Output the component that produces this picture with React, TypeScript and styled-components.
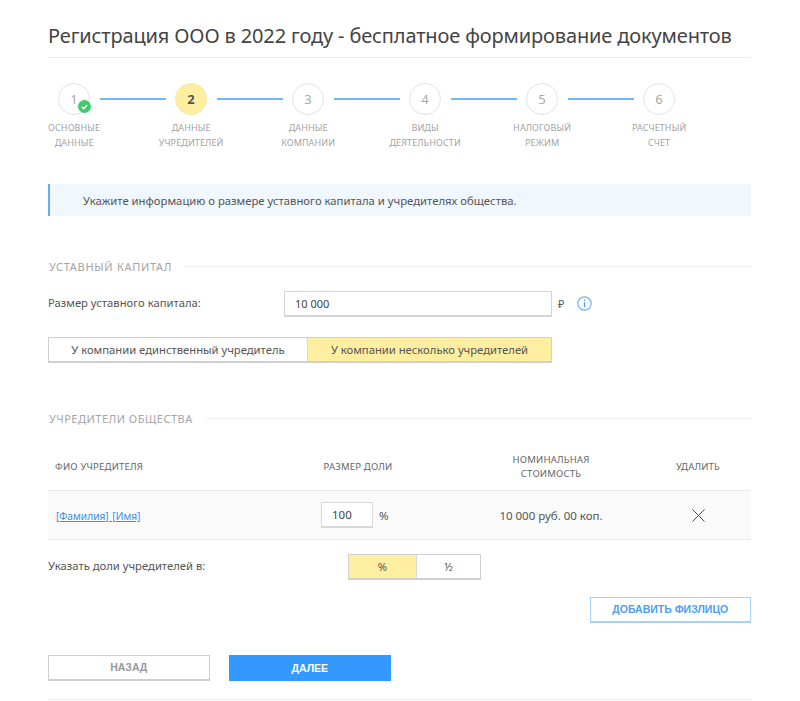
import React from "react";
import styled, {createGlobalStyle} from "styled-components";
import {X} from "lucide-react";

const GlobalStyle = createGlobalStyle`
  html, body {
    margin: 0;
    padding: 0;
    background: #fff;
  }
  * {
    box-sizing: border-box;
  }
`

const Page = styled.div`
  width: 800px;
  height: 701px;
  padding: 0 49px 0 48px;
  font-family: "Noto Sans", "Open Sans", sans-serif;
  color: #555;
  overflow: hidden;
`
const Title = styled.h1`
  margin: 0;
  height: 58px;
  padding-top: 20px;
  font-size: 20px;
  line-height: 32px;
  letter-spacing: -.14px;
  font-weight: 400;
  color: #444;
  white-space: nowrap;
  border-bottom: 1px solid #ececec;
`
const Track = styled.div`
  display: flex;
  align-items: center;
  margin: 25px 0 0 10px;
`
const Circle = styled.div<{$active?: boolean}>`
  position: relative;
  flex: none;
  width: 32px;
  height: 32px;
  border-radius: 50%;
  display: flex;
  align-items: center;
  justify-content: center;
  font-size: 13px;
  font-weight: ${p => p.$active ? 700 : 400};
  color: ${p => p.$active ? "#555" : "#aaa"};
  background: ${p => p.$active ? "#fdeea0" : "#fff"};
  border: 1px solid ${p => p.$active ? "#f5e9a8" : "#e4e4e4"};
`
const Check = styled.svg`
  position: absolute;
  right: -2px;
  bottom: 1px;
  width: 13px;
  height: 13px;
`
const Line = styled.div`
  flex: none;
  width: 66px;
  height: 2px;
  margin: 0 9.5px;
  background: #6db8f7;
`
const Labels = styled.div`
  display: flex;
  margin: 5px 0 0 -32.4px;
`
const Label = styled.div`
  flex: none;
  width: 117px;
  text-align: center;
  font-size: 9px;
  line-height: 15px;
  letter-spacing: .1px;
  text-transform: uppercase;
  color: #a3a3a3;
`
const Notice = styled.div`
  margin-top: 34px;
  height: 32px;
  padding-left: 33px;
  display: flex;
  align-items: center;
  font-size: 11.3px;
  color: #555;
  background: #f0f7fd;
  border-left: 2px solid #62aef8;
`
const SectionHead = styled.div<{$top: number, $spacing: number}>`
  display: flex;
  align-items: center;
  gap: 13px;
  height: 16px;
  margin-top: ${p => p.$top}px;
  padding-left: 1px;
  font-size: 11px;
  letter-spacing: ${p => p.$spacing}px;
  text-transform: uppercase;
  white-space: nowrap;
  color: #a5a5a5;

  &::after {
    content: "";
    flex: 1;
    height: 1px;
    background: #f0f0f0;
  }
`
const FormRow = styled.div`
  display: flex;
  align-items: center;
  margin-top: 17px;
`
const FieldLabel = styled.div`
  width: 236px;
  font-size: 11.25px;
  color: #555;
  margin-top: -3px;
`
const TextInput = styled.input`
  width: 268px;
  height: 26px;
  padding: 0 10px;
  font-family: inherit;
  font-size: 11px;
  color: #444;
  background: #fff;
  border: 1px solid #d4d4d4;
  border-bottom-width: 2px;
  outline: none;
`
const Ruble = styled.span`
  margin: -2px 0 0 6px;
  font-size: 11px;
  color: #555;
`
const InfoIcon = styled.svg`
  margin: -2px 0 0 13px;
  width: 15px;
  height: 15px;
`
const Toggle = styled.div<{$w: number, $top: number}>`
  display: flex;
  width: ${p => p.$w}px;
  height: 26px;
  margin-top: ${p => p.$top}px;
  border: 1px solid #d0d0d0;
  border-bottom-width: 2px;
`
const ToggleItem = styled.button<{$on?: boolean, $w: number}>`
  all: unset;
  box-sizing: border-box;
  width: ${p => p.$w}px;
  text-align: center;
  font-size: 11.25px;
  line-height: 23px;
  color: #555;
  background: ${p => p.$on ? "#fdeea0" : "#fff"};
  & + & {
    border-left: 1px solid #d8d8d8;
  }
`
const TableHead = styled.div`
  display: grid;
  grid-template-columns: 216px 188px 198px 101px;
  align-items: center;
  height: 47px;
  margin-top: 18px;
  font-size: 9.5px;
  line-height: 14px;
  letter-spacing: .2px;
  text-transform: uppercase;
  color: #666;
  border-bottom: 1px solid #e8e8e8;
`
const TableRow = styled.div`
  display: grid;
  grid-template-columns: 216px 188px 198px 101px;
  align-items: center;
  height: 49px;
  font-size: 11.5px;
  background: #fafafa;
  border-bottom: 1px solid #ececec;
`
const NameCell = styled.div`
  padding-left: 7px;
`
const NameLink = styled.a`
  padding-left: 1px;
  font-size: 10.2px;
  word-spacing: 1px;
  color: #3e8fe0;
  text-decoration: underline;
`
const ShareCell = styled.div`
  display: flex;
  align-items: center;
  padding-left: 57px;
  gap: 6px;
`
const ShareInput = styled.input`
  width: 52px;
  height: 26px;
  padding: 0 10px;
  font-family: inherit;
  font-size: 11.5px;
  color: #444;
  background: #fff;
  border: 1px solid #d8d8d8;
  border-bottom-width: 2px;
  outline: none;
`
const Center = styled.div<{$shift?: number}>`
  display: flex;
  justify-content: center;
  text-align: center;
  padding-right: ${p => p.$shift || 0}px;
`
const RatioRow = styled.div`
  display: flex;
  align-items: center;
  margin-top: 14px;
`
const RatioLabel = styled(FieldLabel)`
  width: 300px;
  margin-top: -4px;
`
const AddRow = styled.div`
  display: flex;
  justify-content: flex-end;
  margin-top: 17px;
`
const ActionButton = styled.button<{$kind: "outline" | "ghost" | "primary"}>`
  all: unset;
  box-sizing: border-box;
  width: 161.5px;
  height: 26px;
  text-align: center;
  font-family: "Liberation Sans", Arial, sans-serif;
  font-size: 10.5px;
  font-weight: 700;
  line-height: 23px;
  text-transform: uppercase;
  color: ${p => p.$kind === "primary" ? "#fff" : p.$kind === "ghost" ? "#999" : "#4f9df5"};
  background: ${p => p.$kind === "primary" ? "#3399ff" : "#fff"};
  border: 1px solid ${p => p.$kind === "primary" ? "#3399ff" : p.$kind === "ghost" ? "#cfcfcf" : "#a5d2fb"};
  border-bottom-width: ${p => p.$kind === "primary" ? "1px" : "2px"};
`
const Footer = styled.div`
  display: flex;
  gap: 19.5px;
  margin-top: 32px;
  padding-bottom: 18px;
  border-bottom: 1px solid #efefef;
`

const steps = [
    ["Основные", "данные"],
    ["Данные", "учредителей"],
    ["Данные", "компании"],
    ["Виды", "деятельности"],
    ["Налоговый", "режим"],
    ["Расчетный", "счет"],
]

const App: React.FunctionComponent = () => {
    return (
        <Page>
            <GlobalStyle/>
            <Title>Регистрация ООО в 2022 году - бесплатное формирование документов</Title>

            <Track>
                {steps.map((s, i) => (
                    <React.Fragment key={i}>
                        <Circle $active={i === 1}>
                            {i + 1}
                            {i === 0 &&
                                <Check viewBox="0 0 13 13">
                                    <circle cx="6.5" cy="6.5" r="6.5" fill="#3ecb6b"/>
                                    <path d="M3.7 6.7l2 1.9 3.6-3.6" fill="none" stroke="#fff" strokeWidth="1.5"/>
                                </Check>}
                        </Circle>
                        {i < steps.length - 1 && <Line/>}
                    </React.Fragment>
                ))}
            </Track>
            <Labels>
                {steps.map((s, i) => <Label key={i}>{s[0]}<br/>{s[1]}</Label>)}
            </Labels>

            <Notice>Укажите информацию о размере уставного капитала и учредителях общества.</Notice>

            <SectionHead $top={42} $spacing={.7}>Уставный капитал</SectionHead>
            <FormRow>
                <FieldLabel>Размер уставного капитала:</FieldLabel>
                <TextInput defaultValue="10 000"/>
                <Ruble>₽</Ruble>
                <InfoIcon viewBox="0 0 15 15">
                    <circle cx="7.5" cy="7.5" r="6.7" fill="none" stroke="#6db3f7" strokeWidth="1.2"/>
                    <path d="M7.5 6.3v5M7.5 3.5v1.4" stroke="#4c9cf0" strokeWidth="1.3"/>
                </InfoIcon>
            </FormRow>
            <Toggle $w={504} $top={20}>
                <ToggleItem $w={258}>У компании единственный учредитель</ToggleItem>
                <ToggleItem $w={244} $on>У компании несколько учредителей</ToggleItem>
            </Toggle>

            <SectionHead $top={47} $spacing={.5}>Учредители общества</SectionHead>
            <TableHead>
                <NameCell>ФИО учредителя</NameCell>
                <Center>Размер доли</Center>
                <Center>Номинальная<br/>стоимость</Center>
                <Center $shift={5}>Удалить</Center>
            </TableHead>
            <TableRow>
                <NameCell><NameLink href="#">[Фамилия] [Имя]</NameLink></NameCell>
                <ShareCell>
                    <ShareInput defaultValue="100"/>
                    <span>%</span>
                </ShareCell>
                <Center>10 000 руб. 00 коп.</Center>
                <Center $shift={5}><X size={23} strokeWidth={1} color="#444"/></Center>
            </TableRow>
            <RatioRow>
                <RatioLabel>Указать доли учредителей в:</RatioLabel>
                <Toggle $w={133} $top={0}>
                    <ToggleItem $w={67} $on>%</ToggleItem>
                    <ToggleItem $w={64}>½</ToggleItem>
                </Toggle>
            </RatioRow>
            <AddRow>
                <ActionButton $kind="outline">Добавить физлицо</ActionButton>
            </AddRow>
            <Footer>
                <ActionButton $kind="ghost">Назад</ActionButton>
                <ActionButton $kind="primary">Далее</ActionButton>
            </Footer>
        </Page>
    )
}

export default App
